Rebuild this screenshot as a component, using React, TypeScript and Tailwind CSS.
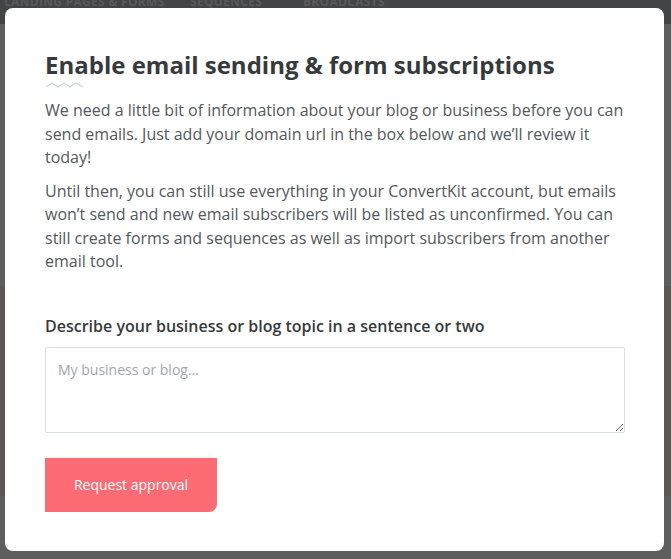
export default function App() {
  return (
    <div
      className="relative h-[559px] w-[671px] overflow-hidden bg-[#5e5e5e]"
      style={{ fontFamily: '"Open Sans", "Liberation Sans", sans-serif' }}
    >
      {/* Background page under the overlay */}
      <div className="flex h-[24px] items-start bg-[#434447] pl-[4px] text-[12px] font-bold uppercase leading-[10px] tracking-wide text-[#58595c]">
        <span className="-mt-[3px] w-[186px]">Landing Pages &amp; Forms</span>
        <span className="-mt-[3px] w-[113px]">Sequences</span>
        <span className="-mt-[3px]">Broadcasts</span>
      </div>
      <div className="h-[262px]" />
      <div className="h-[210px] bg-[#5d5654]" />

      {/* Modal */}
      <div className="absolute left-[5px] top-[8px] h-[543px] w-[659px] rounded-[8px] bg-white px-[40px] pt-[42px]">
        <h1 className="text-[24px] font-bold leading-[30px] text-[#373a3c]">
          Enable email sending &amp; form subscriptions
        </h1>
        <svg width="40" height="8" viewBox="0 0 40 8" className="mt-[1px] block">
          <path
            d="M1 6 L7 2 L13 6 L19 2 L25 6 L31 2 L38 6"
            fill="none"
            stroke="#cfd2d6"
            strokeWidth="1.2"
          />
        </svg>
        <p className="mt-[10px] text-[16px] leading-[23.5px] text-[#53585d]">
          We need a little bit of information about your blog or business before you can send
          emails. Just add your domain url in the box below and we’ll review it today!
        </p>
        <p className="mt-[10px] text-[16px] leading-[23.5px] text-[#53585d]">
          Until then, you can still use everything in your ConvertKit account, but emails won’t
          send and new email subscribers will be listed as unconfirmed. You can still create forms
          and sequences as well as import subscribers from another email tool.
        </p>
        <label className="mt-[40px] block text-[16px] font-semibold leading-[24px] text-[#373a3c]">
          Describe your business or blog topic in a sentence or two
        </label>
        <textarea
          placeholder="My business or blog..."
          className="mt-[9px] block h-[86px] w-[580px] resize-y rounded-[2px] border border-[#d9dee3] px-[12px] py-[10px] text-[14px] leading-[24px] text-[#373a3c] placeholder:text-[#a0a7b0] focus:outline-none"
        />
        <button className="mt-[25px] h-[54px] w-[172px] rounded-br-[8px] bg-[#fd6b74] text-[14px] text-white">
          Request approval
        </button>
      </div>
    </div>
  );
}
